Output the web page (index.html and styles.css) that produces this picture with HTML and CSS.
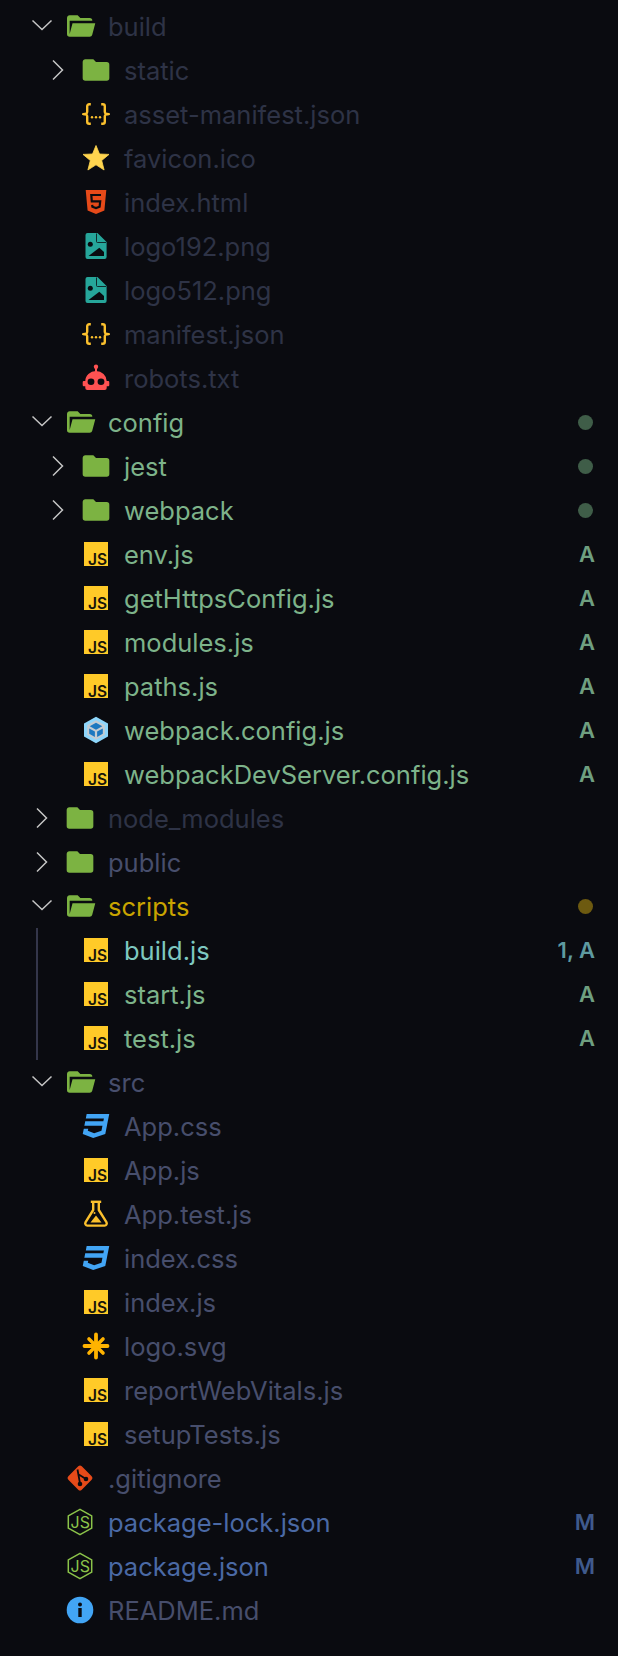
FILE: index.html
```html
<!DOCTYPE html>
<html lang="en">
<head>
<meta charset="utf-8">
<title>Explorer</title>
<link rel="stylesheet" href="styles.css">
</head>
<body>
<svg class="defs" aria-hidden="true">
  <symbol id="down" viewBox="0 0 24 24"><path d="M2.500 6.500 12 15.500 21.500 6.500" fill="none" stroke="#c5c5c5" stroke-width="1.500"/></symbol>
  <symbol id="right" viewBox="0 0 24 24"><path d="M7 2.500 16.500 12 7 21.500" fill="none" stroke="#c5c5c5" stroke-width="1.500"/></symbol>
  <symbol id="folder" viewBox="1.500 1.500 21 21"><path fill="#7cb342" d="M10 4H4c-1.110 0-2 .890-2 2v12a2 2 0 0 0 2 2h16a2 2 0 0 0 2-2V8a2 2 0 0 0-2-2h-8l-2-2z"/></symbol>
  <symbol id="open" viewBox="1.250 1.500 21 21" overflow="visible"><path fill="#7cb342" d="M19 20H4a2 2 0 0 1-2-2V6c0-1.110.890-2 2-2h6l2 2h7a2 2 0 0 1 2 2H4v10l2.140-8h17.070l-2.280 8.500c-.230.870-1.010 1.500-1.930 1.500z"/></symbol>
  <symbol id="js" viewBox="0 0 28 28"><rect x="2" y="2" width="24" height="24" fill="#ffca28"/><text x="25.200" y="24.600" text-anchor="end" class="js-text">JS</text></symbol>
  <symbol id="json" viewBox="0 0 28 28"><g fill="none" stroke="#fbc02d" stroke-width="2.400"><path d="M8.800 4.300H7.200a2 2 0 0 0-2 2V11.500a2.600 2.600 0 0 1-3.500 2.700 2.600 2.600 0 0 1 3.500 2.700V21.700a2 2 0 0 0 2 2H8.800"/><path d="M19.200 4.300H20.800a2 2 0 0 1 2 2V11.500a2.600 2.600 0 0 0 3.500 2.700 2.600 2.600 0 0 0-3.500 2.700V21.700a2 2 0 0 1-2 2H19.200"/></g><g fill="#fbc02d"><circle cx="10" cy="17.300" r="1.200"/><circle cx="14" cy="17.300" r="1.200"/><circle cx="18" cy="17.300" r="1.200"/></g></symbol>
  <symbol id="star" viewBox="0 0 28 28"><polygon fill="#ffd54f" stroke="#ffd54f" stroke-width=".8" stroke-linejoin="round" points="14,1.500 17.500,10 27,10.400 19.700,16.500 22.100,26 14,20.800 5.900,26 8.300,16.500 1,10.400 10.500,10"/></symbol>
  <symbol id="html" viewBox="0 0 28 28"><path fill="#e64a19" d="M3.700 2h20.600l-1.900 20.500L14 26l-8.400-3.500z"/><path fill="none" stroke="#0a0b10" stroke-width="2.200" d="M19 7H9.300l.5 6.300h8.400l-.6 5.500-3.600 1.200-3.600-1.200-.2-2"/></symbol>
  <symbol id="image" viewBox="0 0 28 28"><path fill="#26a69a" d="M5.500 1H15.500L24.600 10V25a2 2 0 0 1-2 2H5.500a2 2 0 0 1-2-2V3a2 2 0 0 1 2-2z"/><path fill="none" stroke="#0a0b10" stroke-width=".8" d="M14.500 1.500V9.500a1 1 0 0 0 1 1H24"/><circle cx="8.300" cy="12.300" r="2.500" fill="#0a0b10"/><path fill="#0a0b10" d="M6.500 24 17.300 15.800 22 20V24z"/></symbol>
  <symbol id="robot" viewBox="0 0 28 28"><circle cx="14" cy="2.700" r="2.200" fill="#ff5252"/><rect x="13" y="3" width="2" height="6" fill="#ff5252"/><path fill="#ff5252" d="M3.300 17A10.700 10 0 0 1 24.700 17H26a1.200 1.200 0 0 1 1.300 1.200V21a1.200 1.200 0 0 1-1.300 1.200H24.700V24a2 2 0 0 1-2 2H5.300a2 2 0 0 1-2-2V22.200H2A1.200 1.200 0 0 1 .700 21V18.200A1.200 1.200 0 0 1 2 17z"/><ellipse cx="9" cy="17.800" rx="3.400" ry="3.300" fill="#0a0b10"/><ellipse cx="19" cy="17.800" rx="3.400" ry="3.300" fill="#0a0b10"/></symbol>
  <symbol id="webpack" viewBox="0 0 28 28"><polygon fill="#8ed6fb" points="14,.700 26,7.400 26,20.600 14,27.300 2,20.600 2,7.400"/><polygon fill="#c3ccd2" points="14,4.300 22.800,9.300 22.800,18.700 14,23.700 5.200,18.700 5.200,9.300"/><polygon fill="#1c78c0" points="14,6.800 20.300,10.300 14,13.800 7.700,10.300"/><polygon fill="#1c78c0" points="7.200,12.400 12.900,15.600 12.900,21 7.200,17.800"/><polygon fill="#1c78c0" points="20.800,12.400 15.100,15.600 15.100,21 20.800,17.800"/></symbol>
  <symbol id="css" viewBox="1.500 1.500 21 21"><path fill="#42a5f5" d="M5 3l-.650 3.340h13.590l-.440 2.160H3.920l-.660 3.330h13.590l-.760 3.810-5.480 1.810-4.750-1.810.330-1.640H2.850L2.060 18l7.850 3 9.050-3 1.200-6.030.240-1.210L21.940 3H5z"/></symbol>
  <symbol id="flask" viewBox="0 0 28 28"><g fill="none" stroke="#fbc02d" stroke-width="2.400" stroke-linejoin="round"><path d="M11.200 2.500V10L3.600 22.200a2.200 2.200 0 0 0 1.900 3.400H22.500a2.200 2.200 0 0 0 1.900-3.400L16.800 10V2.500"/><path d="M8.800 1.800H19.200"/></g><polygon fill="#fbc02d" points="8.500,22.500 14,15.500 19.500,22.500"/><circle cx="12.500" cy="13" r="1" fill="#fbc02d"/></symbol>
  <symbol id="logo" viewBox="0 0 28 28"><g stroke="#ffb300" stroke-linecap="round" fill="none"><path stroke-width="3.800" d="M14 2.500V25.500M2.500 14H25.500"/><path stroke-width="3.600" d="M7 7 21 21M21 7 7 21"/></g><circle cx="14" cy="14" r="4.500" fill="#ffb300"/></symbol>
  <symbol id="git" viewBox="0 0 28 28"><rect x="4.500" y="4.500" width="19" height="19" rx="2.500" fill="#e64a19" transform="rotate(45 14 14)"/><g fill="none" stroke="#0a0b10" stroke-width="1.800"><path d="M11.500 5.500 14 19.500M12.700 10.500 20 15"/></g><circle cx="14" cy="20" r="2.300" fill="#0a0b10"/><circle cx="20" cy="15" r="2.300" fill="#0a0b10"/></symbol>
  <symbol id="node" viewBox="0 0 28 28"><polygon fill="none" stroke="#8bc34a" stroke-width="1.500" stroke-linejoin="round" points="14,1.300 25.700,7.800 25.700,20.200 14,26.700 2.300,20.200 2.300,7.800"/><text x="14.300" y="19.500" text-anchor="middle" class="node-text">JS</text></symbol>
  <symbol id="info" viewBox="0 0 28 28"><circle cx="14" cy="14" r="13.300" fill="#42a5f5"/><rect x="12.300" y="12" width="3.400" height="9" fill="#0a0b10"/><circle cx="14" cy="8.500" r="2" fill="#0a0b10"/></symbol>
</svg>

<main class="tree">
  <div class="row d0"><svg class="chev"><use href="#down"/></svg><svg class="icon"><use href="#open"/></svg><span class="name dim">build</span></div>
  <div class="row d1"><svg class="chev"><use href="#right"/></svg><svg class="icon"><use href="#folder"/></svg><span class="name dim">static</span></div>
  <div class="row d1"><span class="chev"></span><svg class="icon"><use href="#json"/></svg><span class="name dim">asset-manifest.json</span></div>
  <div class="row d1"><span class="chev"></span><svg class="icon"><use href="#star"/></svg><span class="name dim">favicon.ico</span></div>
  <div class="row d1"><span class="chev"></span><svg class="icon"><use href="#html"/></svg><span class="name dim">index.html</span></div>
  <div class="row d1"><span class="chev"></span><svg class="icon"><use href="#image"/></svg><span class="name dim">logo192.png</span></div>
  <div class="row d1"><span class="chev"></span><svg class="icon"><use href="#image"/></svg><span class="name dim">logo512.png</span></div>
  <div class="row d1"><span class="chev"></span><svg class="icon"><use href="#json"/></svg><span class="name dim">manifest.json</span></div>
  <div class="row d1"><span class="chev"></span><svg class="icon"><use href="#robot"/></svg><span class="name dim">robots.txt</span></div>

  <div class="row d0"><svg class="chev"><use href="#down"/></svg><svg class="icon"><use href="#open"/></svg><span class="name added">config</span><span class="dot dot-green"></span></div>
  <div class="row d1"><svg class="chev"><use href="#right"/></svg><svg class="icon"><use href="#folder"/></svg><span class="name added">jest</span><span class="dot dot-green"></span></div>
  <div class="row d1"><svg class="chev"><use href="#right"/></svg><svg class="icon"><use href="#folder"/></svg><span class="name added">webpack</span><span class="dot dot-green"></span></div>
  <div class="row d1"><span class="chev"></span><svg class="icon"><use href="#js"/></svg><span class="name added">env.js</span><span class="badge badge-added">A</span></div>
  <div class="row d1"><span class="chev"></span><svg class="icon"><use href="#js"/></svg><span class="name added">getHttpsConfig.js</span><span class="badge badge-added">A</span></div>
  <div class="row d1"><span class="chev"></span><svg class="icon"><use href="#js"/></svg><span class="name added">modules.js</span><span class="badge badge-added">A</span></div>
  <div class="row d1"><span class="chev"></span><svg class="icon"><use href="#js"/></svg><span class="name added">paths.js</span><span class="badge badge-added">A</span></div>
  <div class="row d1"><span class="chev"></span><svg class="icon"><use href="#webpack"/></svg><span class="name added">webpack.config.js</span><span class="badge badge-added">A</span></div>
  <div class="row d1"><span class="chev"></span><svg class="icon"><use href="#js"/></svg><span class="name added">webpackDevServer.config.js</span><span class="badge badge-added">A</span></div>

  <div class="row d0"><svg class="chev"><use href="#right"/></svg><svg class="icon"><use href="#folder"/></svg><span class="name dim">node_modules</span></div>
  <div class="row d0"><svg class="chev"><use href="#right"/></svg><svg class="icon"><use href="#folder"/></svg><span class="name plain">public</span></div>

  <div class="row d0"><svg class="chev"><use href="#down"/></svg><svg class="icon"><use href="#open"/></svg><span class="name warn">scripts</span><span class="dot dot-yellow"></span></div>
  <div class="group">
    <div class="row d1"><span class="chev"></span><svg class="icon"><use href="#js"/></svg><span class="name info">build.js</span><span class="badge badge-info">1, A</span></div>
    <div class="row d1"><span class="chev"></span><svg class="icon"><use href="#js"/></svg><span class="name added">start.js</span><span class="badge badge-added">A</span></div>
    <div class="row d1"><span class="chev"></span><svg class="icon"><use href="#js"/></svg><span class="name added">test.js</span><span class="badge badge-added">A</span></div>
  </div>

  <div class="row d0"><svg class="chev"><use href="#down"/></svg><svg class="icon"><use href="#open"/></svg><span class="name plain">src</span></div>
  <div class="row d1"><span class="chev"></span><svg class="icon"><use href="#css"/></svg><span class="name plain">App.css</span></div>
  <div class="row d1"><span class="chev"></span><svg class="icon"><use href="#js"/></svg><span class="name plain">App.js</span></div>
  <div class="row d1"><span class="chev"></span><svg class="icon"><use href="#flask"/></svg><span class="name plain">App.test.js</span></div>
  <div class="row d1"><span class="chev"></span><svg class="icon"><use href="#css"/></svg><span class="name plain">index.css</span></div>
  <div class="row d1"><span class="chev"></span><svg class="icon"><use href="#js"/></svg><span class="name plain">index.js</span></div>
  <div class="row d1"><span class="chev"></span><svg class="icon"><use href="#logo"/></svg><span class="name plain">logo.svg</span></div>
  <div class="row d1"><span class="chev"></span><svg class="icon"><use href="#js"/></svg><span class="name plain">reportWebVitals.js</span></div>
  <div class="row d1"><span class="chev"></span><svg class="icon"><use href="#js"/></svg><span class="name plain">setupTests.js</span></div>

  <div class="row d0"><span class="chev"></span><svg class="icon"><use href="#git"/></svg><span class="name plain">.gitignore</span></div>
  <div class="row d0"><span class="chev"></span><svg class="icon"><use href="#node"/></svg><span class="name mod">package-lock.json</span><span class="badge badge-mod">M</span></div>
  <div class="row d0"><span class="chev"></span><svg class="icon"><use href="#node"/></svg><span class="name mod">package.json</span><span class="badge badge-mod">M</span></div>
  <div class="row d0"><span class="chev"></span><svg class="icon"><use href="#info"/></svg><span class="name plain">README.md</span></div>
</main>
</body>
</html>
```

FILE: styles.css
```css
html, body {
  margin: 0;
  background: #0a0b10;
}

.defs {
  display: none;
}

.tree {
  padding-top: 4px;
  font-family: Inter, "Noto Sans", sans-serif;
  font-size: 25.5px;
}

.row {
  display: flex;
  align-items: center;
  height: 44px;
  padding-right: 23px;
}

.d0 { padding-left: 30px; }
.d1 { padding-left: 46px; }

.chev {
  flex: none;
  width: 24px;
  height: 24px;
  margin-right: 12px;
}

.icon {
  flex: none;
  width: 28px;
  height: 28px;
  margin-right: 14px;
  overflow: visible;
}

.js-text {
  font-family: Inter, sans-serif;
  font-size: 15.5px;
  font-weight: 600;
  fill: #16130a;
}

.node-text {
  font-family: Inter, sans-serif;
  font-size: 16px;
  font-weight: 400;
  fill: #8bc34a;
}

.name { white-space: nowrap; }
.dim { color: #2e3346; }
.plain { color: #474e6c; }
.added { color: #7db38a; }
.warn { color: #c9a400; }
.info { color: #7ec8c0; }
.mod { color: #4a69a5; }

.badge {
  margin-left: auto;
  font-size: 22px;
  font-weight: 600;
}

.badge-added { color: #6f9f80; }
.badge-info { color: #5e9aa0; }
.badge-mod { color: #3f5a8c; }

.dot {
  margin-left: auto;
  width: 15px;
  height: 15px;
  margin-right: 2px;
  border-radius: 50%;
}

.dot-green { background: #3f5d48; }
.dot-yellow { background: #6d5a10; }

.group {
  position: relative;
}

.group::before {
  content: "";
  position: absolute;
  left: 36px;
  top: 0;
  bottom: 0;
  width: 2px;
  background: #34364a;
}
```
